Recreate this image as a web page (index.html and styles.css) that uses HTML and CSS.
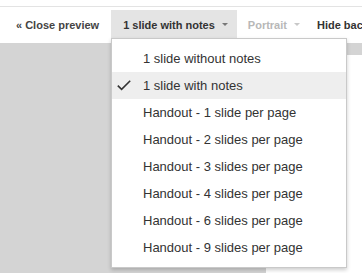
FILE: index.html
```html
<!DOCTYPE html>
<html>
<head>
<meta charset="utf-8">
<link rel="stylesheet" href="styles.css">
</head>
<body>
<div class="topgap"></div>
<div class="toolbar">
  <div class="tb-item close">« Close preview</div>
  <div class="sep"></div>
  <div class="tb-btn active">1 slide with notes<span class="caret"></span></div>
  <div class="tb-btn disabled">Portrait<span class="caret light"></span></div>
  <div class="tb-item hide">Hide background</div>
</div>
<div class="content">
  <div class="page"></div>
</div>
<div class="menu">
  <div class="mi"><span class="slot"></span>1 slide without notes</div>
  <div class="mi sel"><span class="slot"><svg width="14" height="11" viewBox="0 0 14 11"><path d="M0.8 5.6 L4.6 9.4 L13.2 0.8" fill="none" stroke="#333" stroke-width="1.6"/></svg></span>1 slide with notes</div>
  <div class="mi"><span class="slot"></span>Handout - 1 slide per page</div>
  <div class="mi"><span class="slot"></span>Handout - 2 slides per page</div>
  <div class="mi"><span class="slot"></span>Handout - 3 slides per page</div>
  <div class="mi"><span class="slot"></span>Handout - 4 slides per page</div>
  <div class="mi"><span class="slot"></span>Handout - 6 slides per page</div>
  <div class="mi"><span class="slot"></span>Handout - 9 slides per page</div>
</div>
</body>
</html>
```
FILE: styles.css
```css
html, body {
  margin: 0;
  padding: 0;
  width: 362px;
  height: 273px;
  overflow: hidden;
  background: #fff;
  font-family: "Liberation Sans", Arial, sans-serif;
}
.topgap {
  height: 6px;
  background: #fff;
}
.toolbar {
  display: flex;
  align-items: stretch;
  height: 36px;
  border-top: 1px solid #e3e3e3;
  background: #fff;
  font-size: 11px;
  font-weight: bold;
  white-space: nowrap;
  overflow: hidden;
}
.tb-item {
  display: flex;
  align-items: center;
  color: #444;
}
.close {
  padding: 0 9px 0 16px;
}
.sep {
  width: 1px;
  background: #e6e6e6;
  margin-right: 3px;
}
.tb-btn {
  display: flex;
  align-items: center;
  margin-top: 3px;
  padding: 0 9px 4px 12px;
  color: #333;
}
.tb-btn.active {
  background: #e4e4e4;
}
.tb-btn.disabled {
  color: #b8b8b8;
  padding-left: 11px;
  padding-right: 17px;
}
.caret {
  display: inline-block;
  margin-left: 7px;
  width: 0;
  height: 0;
  border-left: 3px solid transparent;
  border-right: 3px solid transparent;
  border-top: 3px solid #777;
}
.caret.light {
  border-top-color: #c8c8c8;
}
.hide {
  color: #333;
}
.content {
  height: 230px;
  background: #d4d4d4;
  padding: 12px 0 0 266px;
  box-sizing: border-box;
}
.page {
  height: 100%;
  background: #fff;
}
.menu {
  position: absolute;
  left: 111px;
  top: 38px;
  width: 234px;
  padding: 6px 0;
  background: #fff;
  border: 1px solid #c9c9c9;
  box-shadow: 0 2px 4px rgba(0,0,0,0.2);
  font-size: 13px;
  color: #333;
}
.mi {
  display: flex;
  align-items: center;
  height: 27px;
}
.mi.sel {
  background: #eeeeee;
}
.slot {
  width: 31px;
  display: flex;
  align-items: center;
  padding-left: 5px;
  box-sizing: border-box;
}
.slot svg {
  display: block;
}
```
